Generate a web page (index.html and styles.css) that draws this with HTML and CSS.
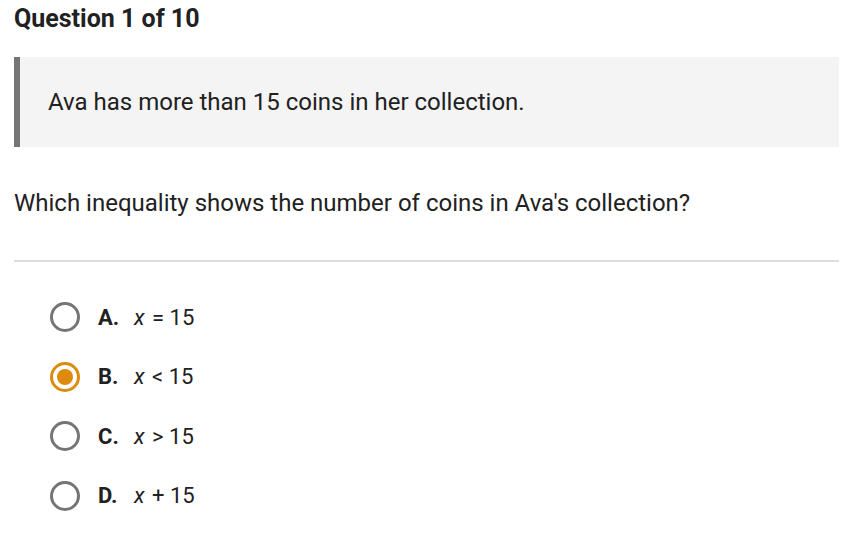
FILE: index.html
```html
<!DOCTYPE html>
<html>
<head>
<meta charset="utf-8">
<link rel="stylesheet" href="styles.css">
</head>
<body>
<div class="page">
  <h1 class="title">Question 1 of 10</h1>
  <div class="callout">Ava has more than 15 coins in her collection.</div>
  <p class="prompt">Which inequality shows the number of coins in Ava's collection?</p>
  <hr class="rule">
  <ul class="options">
    <li class="option"><span class="radio"></span><span class="letter">A.</span><span class="expr"><i>x</i> = 15</span></li>
    <li class="option"><span class="radio selected"></span><span class="letter">B.</span><span class="expr"><i>x</i> &lt; 15</span></li>
    <li class="option"><span class="radio"></span><span class="letter">C.</span><span class="expr"><i>x</i> &gt; 15</span></li>
    <li class="option"><span class="radio"></span><span class="letter">D.</span><span class="expr"><i>x</i> + 15</span></li>
  </ul>
</div>
</body>
</html>
```
FILE: styles.css
```css
html, body {
  margin: 0;
  padding: 0;
  background: #ffffff;
}
body {
  font-family: Roboto, "Noto Sans", sans-serif;
  color: #212121;
}
.page {
  padding: 4px 20px 0 14px;
}
.title {
  margin: 0;
  font-size: 25px;
  line-height: 30px;
  font-weight: 700;
}
.callout {
  margin-top: 23px;
  height: 90px;
  box-sizing: border-box;
  border-left: 6px solid #757575;
  background: #f4f4f4;
  display: flex;
  align-items: center;
  padding-left: 28px;
  font-size: 24px;
}
.prompt {
  margin: 41px 0 0 0;
  font-size: 24px;
  line-height: 30px;
}
.rule {
  margin: 42px 0 0 0;
  border: 0;
  height: 2px;
  background: #dddddd;
}
.options {
  list-style: none;
  margin: 40px 0 0 0;
  padding: 0 0 0 36px;
  display: flex;
  flex-direction: column;
  gap: 29.5px;
}
.option {
  display: flex;
  align-items: center;
  height: 30px;
  font-size: 22px;
}
.radio {
  width: 30px;
  height: 30px;
  box-sizing: border-box;
  border: 3px solid #757575;
  border-radius: 50%;
  display: flex;
  align-items: center;
  justify-content: center;
  margin-right: 18px;
}
.radio.selected {
  border-color: #de8a0c;
}
.radio.selected::after {
  content: "";
  width: 16px;
  height: 16px;
  border-radius: 50%;
  background: #de8a0c;
}
.letter {
  font-weight: 700;
  width: 36px;
}
.expr i {
  font-style: italic;
  padding-right: 2px;
}
```
